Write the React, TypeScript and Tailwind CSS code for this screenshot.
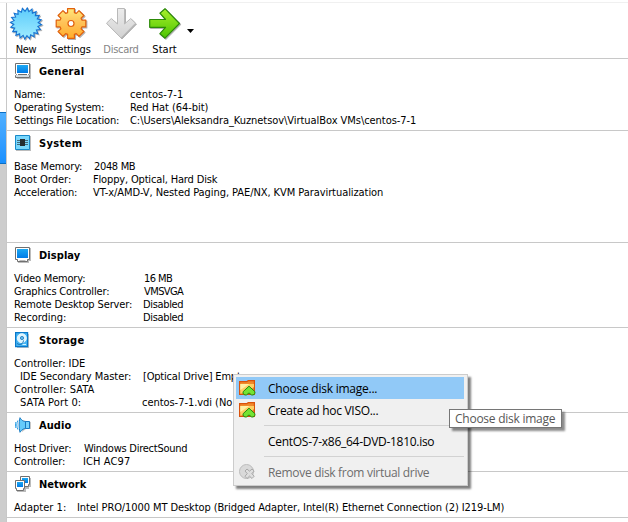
import { useLayoutEffect, useRef, type ReactNode } from "react";

const TAHOMA = "font-['DejaVu_Sans_Condensed','DejaVu_Sans',Tahoma,sans-serif] text-[11px]";
const SEGOE = "font-['Open_Sans','Noto_Sans',sans-serif] text-[12px]";

/** One line of text whose letter spacing is tuned so that it takes `w` pixels. */
function Line({ w, children, className = "" }: { w: number; children: string; className?: string }) {
  const ref = useRef<HTMLSpanElement>(null);
  useLayoutEffect(() => {
    const el = ref.current;
    if (!el) return;
    el.style.letterSpacing = "0px";
    const natural = el.getBoundingClientRect().width;
    el.style.letterSpacing = `${(w + 0.3 - natural) / children.length}px`;
  }, [w, children]);
  return (
    <span ref={ref} className={`inline-block whitespace-pre ${className}`}>
      {children}
    </span>
  );
}

function starPoints(cx: number, cy: number, outer: number, inner: number, n: number) {
  return Array.from({ length: n * 2 }, (_, i) => {
    const r = i % 2 ? inner : outer;
    const a = (i * Math.PI) / n - Math.PI / 2 + 0.08;
    return `${(cx + r * Math.cos(a)).toFixed(2)},${(cy + r * Math.sin(a)).toFixed(2)}`;
  }).join(" ");
}

function gearPoints(cx: number, cy: number) {
  const pts: string[] = [];
  for (let i = 0; i < 8; i++) {
    const base = (i * Math.PI) / 4;
    for (const [r, d] of [[11.4, -0.3], [15.2, -0.23], [15.2, 0.23], [11.4, 0.3]]) {
      const a = base + d;
      pts.push(`${(cx + r * Math.cos(a)).toFixed(2)},${(cy + r * Math.sin(a)).toFixed(2)}`);
    }
  }
  return pts.join(" ");
}

function Gradients() {
  return (
    <svg width="0" height="0" className="absolute">
      <defs>
        <linearGradient id="sky" x1="0" y1="0" x2="0" y2="1"><stop offset="0" stopColor="#5ccbfb" /><stop offset="1" stopColor="#a0ecff" /></linearGradient>
        <linearGradient id="amber" x1="0" y1="0" x2="0" y2="1"><stop offset="0" stopColor="#ffe87a" /><stop offset="0.45" stopColor="#ffc35a" /><stop offset="1" stopColor="#ffae2a" /></linearGradient>
        <linearGradient id="lime" x1="0" y1="0" x2="0" y2="1"><stop offset="0" stopColor="#a8f02c" /><stop offset="1" stopColor="#4cc400" /></linearGradient>
        <linearGradient id="silver" x1="0" y1="0" x2="0" y2="1"><stop offset="0" stopColor="#ececec" /><stop offset="1" stopColor="#d2d2d2" /></linearGradient>
        <linearGradient id="screen" x1="0" y1="0" x2="0" y2="1"><stop offset="0" stopColor="#1ba8f2" /><stop offset="1" stopColor="#007be8" /></linearGradient>
      </defs>
    </svg>
  );
}

const BigIcon = ({ children }: { children: ReactNode }) => (
  <svg width="34" height="34" viewBox="0 0 34 34" className="shrink-0 drop-shadow-[1px_1px_0.5px_rgba(0,0,0,0.3)]">{children}</svg>
);
const NewIcon = () => (
  <BigIcon><polygon points={starPoints(17, 16.5, 15.6, 12.2, 20)} fill="url(#sky)" stroke="#1673d2" strokeWidth="1.1" /></BigIcon>
);
const SettingsIcon = () => (
  <BigIcon>
    <polygon points={gearPoints(17, 16.5)} fill="url(#amber)" stroke="#e2610c" strokeWidth="1.2" strokeLinejoin="round" />
    <circle cx="17" cy="16.5" r="3" fill="#fff" stroke="#e2610c" strokeWidth="1.2" />
  </BigIcon>
);
const DiscardIcon = () => (
  <BigIcon><path d="M13.5 1.5h7V17l6.2-5.5 4.8 4.7L17 31 2.5 16.2l4.8-4.7 6.2 5.5z" fill="url(#silver)" stroke="#b9b9b9" /></BigIcon>
);
const StartIcon = () => (
  <BigIcon><path d="M1.7 12.5h15.8l-5.6-6.3L17 1.7l14.5 14.8L17 31.2l-5.1-4.5 5.6-6.4H1.7z" fill="url(#lime)" stroke="#2c8a08" strokeWidth="1.2" strokeLinejoin="round" /></BigIcon>
);

const SmallIcon = ({ children }: { children: ReactNode }) => (
  <svg width="17" height="17" viewBox="0 0 17 17" className="shrink-0">{children}</svg>
);
const GeneralIcon = () => (
  <SmallIcon>
    <path d="M1 1h15v15H2z" fill="#bcbcbc" />
    <path d="M.5.5h14v10l-1 1 1 1v2H.5v-2l1-1-1-1z" fill="#fff" stroke="#707070" />
    <path d="M2 2h11v8H2z" fill="url(#screen)" />
    <path d="M1 12h13v2H1z" fill="#d6dce0" /><path d="M3 11.5h9" stroke="#707070" />
  </SmallIcon>
);
const SystemIcon = () => (
  <SmallIcon>
    <path d="M1 1h15v15H1z" fill="#bcbcbc" />
    <path d="M.5.5h14v14H.5z" fill="#79d7fc" stroke="#1889c9" />
    <path d="M2 5.5h11M2 7.5h11M2 9.5h11" stroke="#436a7d" /><path d="M5 4h5v7H5z" fill="#252c30" />
  </SmallIcon>
);
const DisplayIcon = () => (
  <SmallIcon>
    <path d="M1 1h15v13h-2v2H3z" fill="#bcbcbc" />
    <path d="M.5.5h14v12h-2v2h-10v-2h-2z" fill="#fff" stroke="#707070" />
    <path d="M2 2h11v9H2z" fill="url(#screen)" />
    <path d="M4.5 13.5h6" stroke="#bbb" />
  </SmallIcon>
);
const StorageIcon = () => (
  <SmallIcon>
    <path d="M2 2h12v14H2z" fill="#c4c4c4" />
    <path d="M.6.6h12v14H.6z" fill="#46b5f4" stroke="#0878ca" strokeWidth="1.2" />
    <circle cx="6.8" cy="6.2" r="4.5" fill="#ddf4ff" stroke="#e9faff" />
    <circle cx="7" cy="6" r="1.6" fill="#62bdf0" stroke="#1874b8" strokeWidth=".8" />
    <path d="M2 11.5c3 2 6 .8 6.5-3" fill="none" stroke="#1972b3" /><path d="M7.5 12.5h3.5" stroke="#d8f4ff" />
  </SmallIcon>
);
const AudioIcon = () => (
  <SmallIcon>
    <path d="M7 3v12l4-3h5V5" fill="#c8c8c8" />
    <path d="M10.5 4.5h4v7h-4z" fill="#76d2fb" stroke="#187ac2" />
    <path d="M5 .7C7 4 9 4.5 10.5 4.5v7C9 11.5 7 12.3 5 15.3 3.8 11 3.8 5 5 .7z" fill="#65cbfb" stroke="#187ac2" />
    <path d="M2.8 3.5c-1.3 3-1.3 6 0 9M.9 5c-.7 2-.7 4 0 6" fill="none" stroke="#299de5" />
  </SmallIcon>
);
const NetworkIcon = () => (
  <SmallIcon>
    <path d="M6 2h10v9h-2v2h-3v3H2v-3" fill="#bcbcbc" />
    <path d="M5.5.5h9v8h-1v2h-7v-2h-1z" fill="#fff" stroke="#707070" /><path d="M7 2h6v5H7z" fill="url(#screen)" />
    <path d="M.5 4.5h9v8h-1v2h-7v-2h-1z" fill="#fff" stroke="#707070" /><path d="M2 6h6v5H2z" fill="url(#screen)" />
  </SmallIcon>
);

const FolderIcon = () => (
  <SmallIcon>
    <path d="M16 2v13h-1V3z" fill="#777" opacity=".35" />
    <path d="M.6 1.6H8L9.3.6h6.1v13.8H.6z" fill="#f08a2c" stroke="#d9520b" strokeWidth="1.2" />
    <path d="M1.3 4H15v3L9 12l-7.7 1.8z" fill="#ffcf62" />
    <path d="M1.3 10V4h9z" fill="#fff0a5" />
    <path d="M10 6.2l5.9 5.5c.7 1.9-1.4 4-3.4 3.2L10 12.9l-2.5 2c-2 .8-4.1-1.3-3.4-3.2z" fill="#74e333" stroke="#248911" />
  </SmallIcon>
);
const RemoveIcon = () => (
  <SmallIcon>
    <circle cx="7.5" cy="7.5" r="7" fill="#d9d9d9" stroke="#bcbcbc" />
    <path d="M6 7l2-2 2.5 2.2L13 5l2.2 2-2.4 2.6 2.4 2.6-2.2 2.3-2.5-2.4L8 14.5l-2-2.3 2.3-2.6z" fill="#dedede" stroke="#a9a9a9" />
  </SmallIcon>
);

type Cell = [text: string, width: number, indent?: string];
type Row = [label: Cell, value?: Cell];
interface SectionData { title: string; w: number; icon: ReactNode; height: string; column: string; rows: Row[] }

const sections: SectionData[] = [
  { title: "General", w: 45, icon: <GeneralIcon />, height: "h-[72px]", column: "w-[116px]", rows: [
    [["Name:", 31], ["centos-7-1", 53]],
    [["Operating System:", 90], ["Red Hat (64-bit)", 78]],
    [["Settings File Location:", 105], ["C:\\Users\\Aleksandra_Kuznetsov\\VirtualBox VMs\\centos-7-1", 286]],
  ] },
  { title: "System", w: 43, icon: <SystemIcon />, height: "h-[112px]", column: "w-[79px]", rows: [
    [["Base Memory:", 68], ["2048 MB", 41, "pl-px"]],
    [["Boot Order:", 57], ["Floppy, Optical, Hard Disk", 124]],
    [["Acceleration:", 63], ["VT-x/AMD-V, Nested Paging, PAE/NX, KVM Paravirtualization", 290]],
  ] },
  { title: "Display", w: 41, icon: <DisplayIcon />, height: "h-[85px]", column: "w-[129px]", rows: [
    [["Video Memory:", 71], ["16 MB", 28, "pl-px"]],
    [["Graphics Controller:", 95], ["VMSVGA", 39, "pl-px"]],
    [["Remote Desktop Server:", 118], ["Disabled", 40]],
    [["Recording:", 52], ["Disabled", 40]],
  ] },
  { title: "Storage", w: 45, icon: <StorageIcon />, height: "h-[85px]", column: "w-[128px]", rows: [
    [["Controller: IDE", 71]],
    [["IDE Secondary Master:", 111, "pl-1.5"], ["[Optical Drive] Empty", 103, "pl-px"]],
    [["Controller: SATA", 80]],
    [["SATA Port 0:", 61, "pl-1.5"], ["centos-7-1.vdi (No", 90]],
  ] },
  { title: "Audio", w: 32, icon: <AudioIcon />, height: "h-[59px]", column: "w-[69px]", rows: [
    [["Host Driver:", 57], ["Windows DirectSound", 103, "pl-px"]],
    [["Controller:", 51], ["ICH AC97", 47]],
  ] },
  { title: "Network", w: 47, icon: <NetworkIcon />, height: "h-[46px]", column: "w-[63px]", rows: [
    [["Adapter 1:", 52], ["Intel PRO/1000 MT Desktop (Bridged Adapter, Intel(R) Ethernet Connection (2) I219-LM)", 427]],
  ] },
];

function Section({ title, w, icon, height, column, rows }: SectionData) {
  return (
    <section className={`${height} shrink-0 border-t border-[#c8c8c8] pl-[7px]`}>
      <header className="flex h-6 items-center pl-px">
        <div className="w-6 pt-px">{icon}</div>
        <h2 className="font-bold leading-[13px]"><Line w={w}>{title}</Line></h2>
      </header>
      <div className="mt-[5px] leading-[13px]">
        {rows.map(([label, value], i) => (
          <div key={i} className="flex h-[13px]">
            <div className={`${column} shrink-0 ${label[2] ?? ""}`}><Line w={label[1]}>{label[0]}</Line></div>
            {value && <div className={value[2] ?? ""}><Line w={value[1]}>{value[0]}</Line></div>}
          </div>
        ))}
      </div>
    </section>
  );
}

function Tool({ label, w, icon, width, muted = false }: { label: string; w: number; icon: ReactNode; width: string; muted?: boolean }) {
  return (
    <div className={`flex ${width} flex-col items-center ${muted ? "text-[#848484]" : ""}`}>
      {icon}
      <Line w={w} className="mt-0.5 leading-[13px]">{label}</Line>
    </div>
  );
}

function MenuItem({ label, w, icon, active = false, muted = false }: { label: string; w: number; icon?: ReactNode; active?: boolean; muted?: boolean }) {
  return (
    <div className={`flex h-[22px] items-center pl-[3px] ${active ? "bg-[#91c9f7]" : ""} ${muted ? "text-[#6d6d6d]" : ""}`}>
      <div className="w-[29px] shrink-0">{icon}</div>
      <Line w={w} className="pt-0.5">{label}</Line>
    </div>
  );
}

export default function App() {
  return (
    <div className={`relative flex h-[522px] w-[628px] flex-col overflow-hidden bg-white text-black ${TAHOMA}`}>
      <Gradients />
      <div className="h-[3px] shrink-0 border-b border-[#f0f0f0]" />
      <div className="flex min-h-0 grow">
        <aside className="flex w-[7px] shrink-0 flex-col border-r border-[#c8c8c8]">
          <div className="h-[56px] shrink-0 border-b border-[#c8c8c8]" />
          <div className="h-[52px] shrink-0" />
          <div className="mt-px h-[52px] shrink-0 border-y border-[#0b6fc4] bg-linear-to-b from-[#50b0ff] to-[#1890ff]" />
          <div className="grow bg-[#cdcdcd]" />
        </aside>
        <main className="flex grow flex-col">
          <div className="flex h-[55px] shrink-0 pt-1">
            <Tool label="New" w={20} icon={<NewIcon />} width="w-[38px]" />
            <Tool label="Settings" w={39} icon={<SettingsIcon />} width="w-[52px]" />
            <Tool label="Discard" w={35} icon={<DiscardIcon />} width="w-[48px]" muted />
            <Tool label="Start" w={24} icon={<StartIcon />} width="w-[39px]" />
            <svg width="7" height="4" viewBox="0 0 7 4" className="mt-[22px] ml-[3px]"><path d="M0 0h7L3.5 4z" /></svg>
          </div>
          {sections.map((s) => <Section key={s.title} {...s} />)}
          <div className="border-t border-[#c8c8c8]" />
        </main>
      </div>

      <div className={`absolute left-[233px] top-[374px] h-[112px] w-[235px] border border-[#ccc] bg-[#f0f0f0] p-0.5 pr-[3px] shadow-[3px_3px_2px_0_rgba(0,0,0,0.5)] ${SEGOE}`}>
        <MenuItem label="Choose disk image..." w={109} icon={<FolderIcon />} active />
        <MenuItem label="Create ad hoc VISO..." w={110} icon={<FolderIcon />} />
        <div className="ml-7 my-1 h-px bg-[#d2d2d2]" />
        <MenuItem label="CentOS-7-x86_64-DVD-1810.iso" w={166} />
        <div className="ml-7 my-1 h-px bg-[#d2d2d2]" />
        <MenuItem label="Remove disk from virtual drive" w={161} icon={<RemoveIcon />} muted />
      </div>
      <div className={`absolute left-[449px] top-[409px] flex h-[19px] w-[113px] items-center border border-[#767676] bg-white pl-[5px] text-[#575757] shadow-[3px_3px_2px_0_rgba(0,0,0,0.45)] ${SEGOE}`}>
        <Line w={100}>Choose disk image</Line>
      </div>
    </div>
  );
}
